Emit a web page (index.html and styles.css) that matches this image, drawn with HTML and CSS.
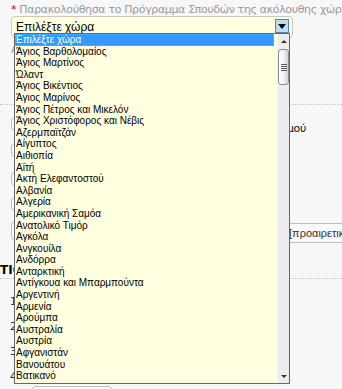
FILE: index.html
```html
<!DOCTYPE html>
<html lang="el">
<head>
<meta charset="utf-8">
<title>Επιλογή χώρας</title>
<link rel="stylesheet" href="styles.css">
</head>
<body>
<div class="page">
  <div class="sec">
    <div class="lbl"><span class="req">*</span> Παρακολούθησα το Πρόγραμμα Σπουδών της ακόλουθης χώρας</div>
    <div class="select">
      <span class="sel-text">Επιλέξτε χώρα</span>
      <span class="sel-btn"><span class="tri-down"></span></span>
    </div>
    <div class="lbl note">Αν δεν βρίσκετε τη χώρα σας, επιλέξτε «Άλλη»</div>
  </div>
  <div class="sep sep-top"></div>
  <div class="sec">
    <div class="row1">
      <div class="box b1"></div>
      <div class="rlabel">Επωνυμία Οργανισμού</div>
    </div>
    <div class="box b2"></div>
    <div class="box b3"></div>
    <div class="box b4"></div>
    <div class="row5">
      <div class="box b5"></div>
      <div class="input">[προαιρετικό]</div>
    </div>
  </div>
  <h2 class="heading">ΤΙΟ</h2>
  <div class="sep"></div>
  <div class="qs">
    <div class="q">1</div>
    <div class="q">2</div>
    <div class="q">3</div>
    <div class="q q-last">4</div>
  </div>
  <div class="box b6"></div>

  <div class="dropdown">
    <div class="opts">
      <div class="opt sel">Επιλέξτε χώρα</div>
      <div class="opt">Άγιος Βαρθολομαίος</div>
      <div class="opt">Άγιος Μαρτίνος</div>
      <div class="opt">Ώλαντ</div>
      <div class="opt">Άγιος Βικέντιος</div>
      <div class="opt">Άγιος Μαρίνος</div>
      <div class="opt">Άγιος Πέτρος και Μικελόν</div>
      <div class="opt">Άγιος Χριστόφορος και Νέβις</div>
      <div class="opt">Αζερμπαϊτζάν</div>
      <div class="opt">Αίγυπτος</div>
      <div class="opt">Αιθιοπία</div>
      <div class="opt">Αϊτή</div>
      <div class="opt">Ακτή Ελεφαντοστού</div>
      <div class="opt">Αλβανία</div>
      <div class="opt">Αλγερία</div>
      <div class="opt">Αμερικανική Σαμόα</div>
      <div class="opt">Ανατολικό Τιμόρ</div>
      <div class="opt">Αγκόλα</div>
      <div class="opt">Ανγκουίλα</div>
      <div class="opt">Ανδόρρα</div>
      <div class="opt">Ανταρκτική</div>
      <div class="opt">Αντίγκουα και Μπαρμπούντα</div>
      <div class="opt">Αργεντινή</div>
      <div class="opt">Αρμενία</div>
      <div class="opt">Αρούμπα</div>
      <div class="opt">Αυστραλία</div>
      <div class="opt">Αυστρία</div>
      <div class="opt">Αφγανιστάν</div>
      <div class="opt">Βανουάτου</div>
      <div class="opt">Βατικανό</div>
    </div>
    <div class="sb">
      <span class="sb-up"></span>
      <span class="sb-thumb"><span class="grip"></span><span class="grip"></span><span class="grip"></span><span class="grip"></span></span>
      <span class="sb-space"></span>
      <span class="sb-down"></span>
    </div>
  </div>
</div>
</body>
</html>
```
FILE: styles.css
```css
html, body {
  margin: 0;
  padding: 0;
  background: #f7f7f7;
}
.page {
  position: relative;
  width: 342px;
  height: 389px;
  overflow: hidden;
  padding-top: 3px;
  box-sizing: border-box;
  font-family: "DejaVu Sans", Verdana, sans-serif;
  font-size: 11px;
  color: #222;
}
.sec {
  padding-left: 11px;
}
.lbl {
  line-height: 13px;
  height: 13px;
  color: #9a9a9a;
  white-space: nowrap;
  letter-spacing: -0.35px;
}
.req {
  color: #d0021b;
}
.note {
  margin-top: 5px;
  line-height: 14px;
  height: 14px;
}
.select {
  display: flex;
  align-items: flex-start;
  width: 282px;
  height: 22px;
  box-sizing: border-box;
  border: 1px solid #c9c9c0;
  border-radius: 4px;
  background: #ffffe0;
}
.sel-text {
  padding: 3px 0 0 4px;
  line-height: 14px;
  font-family: "Liberation Sans", Arial, sans-serif;
  font-size: 12px;
  color: #000;
}
.sel-btn {
  margin: 2px 3px 0 auto;
  width: 14px;
  height: 14px;
  box-sizing: border-box;
  border: 1px solid #4f86b3;
  background: #b9def6;
  display: flex;
  justify-content: center;
  align-items: center;
}
.tri-down {
  width: 0;
  height: 0;
  border-left: 4px solid transparent;
  border-right: 4px solid transparent;
  border-top: 5px solid #000;
}
.sep {
  border-top: 1px dotted #c4c4c4;
}
.sep-top {
  margin-top: 47px;
}
.box {
  box-sizing: border-box;
  border: 1px solid #bdbdbd;
  border-radius: 4px;
  background: #fcfcfc;
  width: 220px;
}
.row1 {
  display: flex;
  align-items: flex-start;
  margin-top: 12px;
  padding-right: 36px;
}
.b1 { height: 14px; width: 150px; }
.rlabel {
  margin-left: auto;
  padding-top: 5px;
  line-height: 14px;
  color: #111;
  white-space: nowrap;
  letter-spacing: -0.35px;
}
.b2 { height: 14px; margin-top: 7px; }
.b3 { height: 14px; margin-top: 15px; }
.b4 { height: 14px; margin-top: 11px; }
.row5 {
  display: flex;
  align-items: flex-start;
  margin-top: 10px;
  gap: 5px;
}
.b5 { height: 19px; width: 269px; flex-shrink: 0; }
.input {
  flex-shrink: 0;
  margin-top: 2px;
  width: 120px;
  height: 20px;
  box-sizing: border-box;
  border: 1px solid #bcbcbc;
  background: #f9f9f9;
  padding-left: 3px;
  line-height: 18px;
  font-family: "Liberation Sans", Arial, sans-serif;
  font-size: 11px;
  color: #333;
  white-space: nowrap;
}
.heading {
  margin: 20px 0 0 0;
  height: 15px;
  line-height: 15px;
  font-size: 12px;
  font-weight: bold;
  color: #000;
}
.qs {
  margin-top: 16px;
}
.q {
  height: 25px;
  line-height: 14px;
  padding-left: 10px;
  color: #222;
}
.q-last {
  height: 16px;
}
.b6 {
  margin-left: 32px;
  width: 80px;
  height: 18px;
}

/* open dropdown list */
.dropdown {
  position: absolute;
  left: 14px;
  top: 33px;
  width: 276px;
  height: 351px;
  box-sizing: border-box;
  border: 1px solid #666;
  background: #ffffe0;
  display: flex;
  overflow: hidden;
}
.opts {
  flex: 1;
  display: flex;
  flex-direction: column;
  font-family: "Liberation Sans", Arial, sans-serif;
  font-size: 10px;
  color: #000;
  min-width: 0;
}
.opt {
  height: 11.6px;
  line-height: 11.6px;
  padding-left: 1px;
  white-space: nowrap;
  flex-shrink: 0;
}
.opt.sel {
  margin-right: 3px;
  background: #3399ff;
  color: #fff;
  outline: 1px dotted #e39a2a;
  outline-offset: -1px;
}
.sb {
  width: 12px;
  flex-shrink: 0;
  background: #ececec;
  border-left: 1px solid #f6f6f2;
  box-sizing: border-box;
  display: flex;
  flex-direction: column;
  align-items: center;
}
.sb-up {
  margin-top: 6px;
  width: 0;
  height: 0;
  border-left: 3px solid transparent;
  border-right: 3px solid transparent;
  border-bottom: 3px solid #333;
}
.sb-thumb {
  margin-top: 6px;
  width: 11px;
  height: 36px;
  box-sizing: border-box;
  border: 1px solid #8d8d8d;
  border-radius: 3px;
  background: linear-gradient(to right, #ffffff 0%, #f1f1f1 55%, #cfcfcf 100%);
  display: flex;
  flex-direction: column;
  align-items: center;
  justify-content: center;
  gap: 1px;
}
.grip {
  width: 6px;
  height: 1px;
  background: #5a5a5a;
}
.sb-space {
  flex: 1;
}
.sb-down {
  margin-bottom: 5px;
  width: 0;
  height: 0;
  border-left: 3px solid transparent;
  border-right: 3px solid transparent;
  border-top: 3px solid #333;
}
```
